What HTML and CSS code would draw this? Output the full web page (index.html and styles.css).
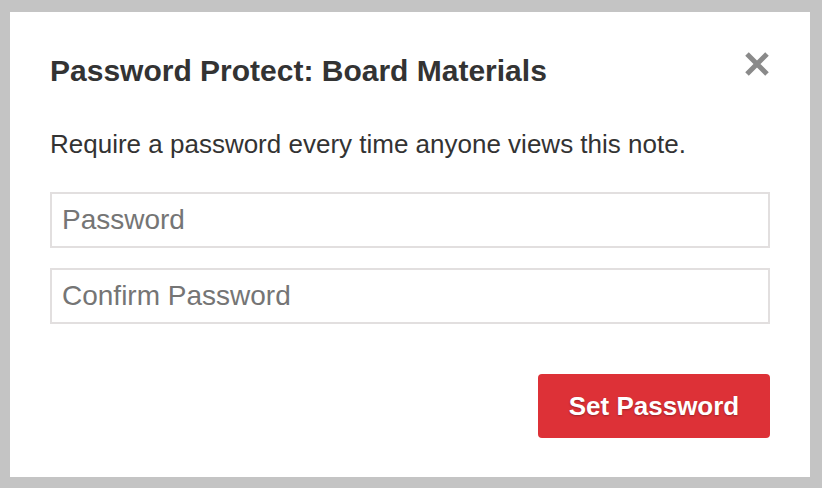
FILE: index.html
```html
<!DOCTYPE html>
<html lang="en">
<head>
<meta charset="utf-8">
<title>Password Protect</title>
<link rel="stylesheet" href="styles.css">
</head>
<body>
<div class="dialog">
  <div class="header">
    <h1 class="title">Password Protect: Board Materials</h1>
    <button class="close" type="button" aria-label="Close">
      <svg width="24" height="24" viewBox="0 0 24 24"><path d="M2 2L22 22M22 2L2 22" stroke="#8a8a8a" stroke-width="5" fill="none"/></svg>
    </button>
  </div>
  <p class="desc">Require a password every time anyone views this note.</p>
  <form class="form">
    <input class="field" type="password" placeholder="Password">
    <input class="field" type="password" placeholder="Confirm Password">
    <div class="actions">
      <button class="submit" type="button">Set Password</button>
    </div>
  </form>
</div>
</body>
</html>
```

FILE: styles.css
```css
html, body {
  margin: 0;
  padding: 0;
}
body {
  background: #c4c4c4;
  font-family: "Liberation Sans", Arial, Helvetica, sans-serif;
  color: #333;
}
.dialog {
  box-sizing: border-box;
  width: 800px;
  height: 465px;
  margin: 12px 0 0 10px;
  background: #fff;
  padding: 41px 40px 0 40px;
}
.header {
  display: flex;
  justify-content: space-between;
  align-items: flex-start;
}
.title {
  margin: 0;
  font-size: 30px;
  line-height: 36px;
  font-weight: bold;
  color: #333;
}
.close {
  margin: -1px 1px 0 0;
  padding: 0;
  border: 0;
  background: none;
  width: 24px;
  height: 24px;
  display: block;
  cursor: pointer;
}
.close svg {
  display: block;
}
.desc {
  margin: 39px 0 0 0;
  font-size: 26px;
  line-height: 32px;
  color: #333;
}
.form {
  margin-top: 32px;
  display: flex;
  flex-direction: column;
  gap: 20px;
}
.field {
  box-sizing: border-box;
  width: 100%;
  height: 56px;
  border: 2px solid #e2dfdf;
  border-radius: 0;
  padding: 0 10px;
  font-family: "Liberation Sans", Arial, Helvetica, sans-serif;
  font-size: 28px;
  color: #333;
  outline: none;
  margin: 0;
}
.field::placeholder {
  color: #757575;
  opacity: 1;
}
.actions {
  display: flex;
  justify-content: flex-end;
  margin-top: 30px;
}
.submit {
  width: 232px;
  height: 64px;
  border: 0;
  border-radius: 4px;
  background: #dd3137;
  color: #fff;
  font-family: "Liberation Sans", Arial, Helvetica, sans-serif;
  font-size: 26px;
  font-weight: bold;
  text-shadow: 0 1px 2px rgba(0, 0, 0, 0.3);
  padding: 0;
  cursor: pointer;
}
```
